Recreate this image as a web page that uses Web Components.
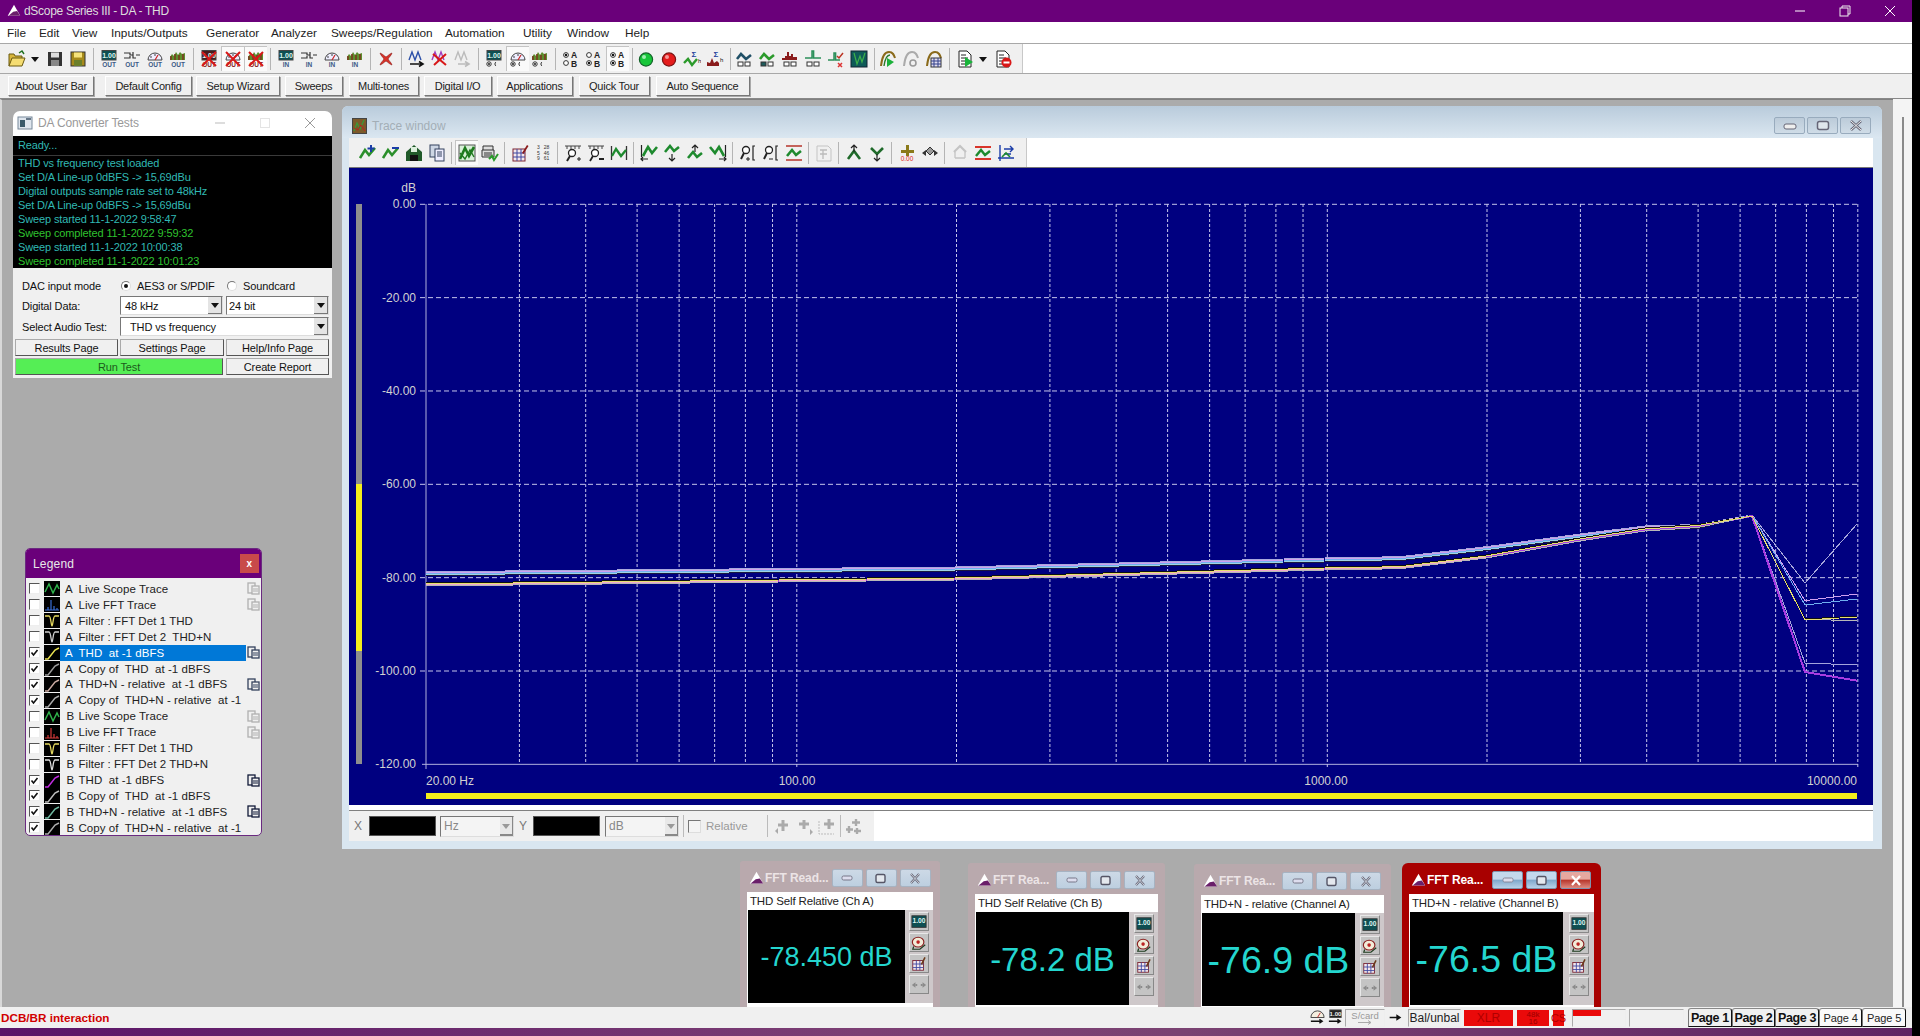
<!DOCTYPE html>
<html>
<head>
<meta charset="utf-8">
<title>dScope Series III - DA - THD</title>
<style>
  html, body { margin: 0; height: 100%; background: #000; overflow: hidden; }
  body { font-family: "Liberation Sans", Arial, sans-serif; font-size: 11px; color: #111; }
</style>
</head>
<body>
<ds-app>
  <ds-titlebar text="dScope Series III - DA - THD"></ds-titlebar>
  <ds-menubar></ds-menubar>
  <ds-toolbar main items="folder down save saveas | meter-out conn-out gauge-out spec-out | meter-x *gauge-x *spec-x | meter-in conn-in gauge-in spec-in | redcross | peaks peaks-x peaks-off | meter-r *gauge-r spec-r | ab1 ab2 *ab3 ! green red sigma-wave sigma-spec ! wave-box wave-box2 spec-box spike-box spike-x scope ! play-wave off-wave notes | doc-play down doc-stop"></ds-toolbar>
  <ds-userbar></ds-userbar>
  <ds-mdi>
    <da-tests></da-tests>
    <legend-window></legend-window>
    <trace-window></trace-window>
    <fft-reader style="left:740px;top:762px;width:200px" name="FFT Read..." caption="THD Self Relative (Ch A)" value="-78.450 dB" size="27" dw="157"></fft-reader>
    <fft-reader style="left:968px;top:764px;width:197px" name="FFT Rea..." caption="THD Self Relative (Ch B)" value="-78.2 dB" size="33"></fft-reader>
    <fft-reader style="left:1194px;top:765px;width:197px" name="FFT Rea..." caption="THD+N - relative (Channel A)" value="-76.9 dB" size="37.5"></fft-reader>
    <fft-reader style="left:1402px;top:764px;width:199px" name="FFT Rea..." caption="THD+N - relative (Channel B)" value="-76.5 dB" size="37.5" active></fft-reader>
  </ds-mdi>
  <ds-statusbar></ds-statusbar>
</ds-app>

<script>
// small icon set, all drawn on an 18x18 box
const zig = (c = '#2b8f2b', w = 2.6, p = '1,14 6,6 10,11 16,4') =>
  `<polyline points="${p}" fill="none" stroke="${c}" stroke-width="${w}"/>`;
const tag = (t, c = '#3c5a86', y = 17) =>
  `<text x="9" y="${y}" font-size="6.5" font-weight="700" fill="${c}" text-anchor="middle">${t}</text>`;
const cross = '<path d="M2 2L16 16M16 2L2 16" stroke="#d81818" stroke-width="2"/>';
const radios = '<circle cx="4" cy="14" r="2.2" fill="#fff" stroke="#333"/><circle cx="4" cy="14" r=".9" fill="#000"/><path d="M11 12a2.4 2.4 0 0 0 0 4" fill="none" stroke="#333"/>';
const parts = {
  meter: '<rect x="2" y="0.5" width="14" height="9.5" fill="#0e4f52" stroke="#444"/><text x="9" y="8" font-size="7" font-weight="700" fill="#dff5f0" text-anchor="middle">1.00</text>',
  conn: '<path d="M1 3h6v2h3M1 8h6V6M10 2v6h3M13 5h4" fill="none" stroke="#333" stroke-width="1.2"/>',
  gauge: '<path d="M2 10a7 7 0 0 1 14 0z" fill="#eef" stroke="#444"/><path d="M9 10l3-5" stroke="#c22" stroke-width="1.2"/><path d="M4 7h2M9 4v2" stroke="#444"/>',
  spec: '<path d="M1 10V7l2-3 2 2 2-4 2 3 2-3 2 2 3-1v7z" fill="#5d8f2e"/><path d="M2 10V6M6 10V4M10 10V5M14 10V4" stroke="#7b3a20" stroke-width="1.6"/>'
};
function abIcon(a, b, col = '#222') {
  const dot = (y, on) => `<circle cx="4" cy="${y}" r="2.4" fill="#fff" stroke="#333"/>` + (on ? `<circle cx="4" cy="${y}" r="1.2" fill="#111"/>` : '');
  return dot(5, a) + dot(13, b) +
    `<text x="12" y="8" font-size="8.5" font-weight="700" fill="${col}" text-anchor="middle">A</text><text x="12" y="17" font-size="8.5" font-weight="700" fill="${col}" text-anchor="middle">B</text>`;
}
const icons = {
  folder: '<path d="M1 16V4h5l1 2h7v3" fill="#d8b63c" stroke="#6b5a10"/><path d="M1 16l3-8h13l-3 8z" fill="#f5dd72" stroke="#6b5a10"/><path d="M11 3l3-2 2 3" fill="none" stroke="#1c6e1c" stroke-width="1.4"/>',
  down: '<path d="M4 7h8l-4 5z" fill="#111"/>',
  save: '<rect x="2" y="2" width="14" height="14" fill="#333"/><rect x="5" y="2.5" width="8" height="5" fill="#ddd"/><rect x="5" y="10" width="8" height="6" fill="#888"/>',
  saveas: '<rect x="2" y="2" width="14" height="14" fill="#a68a1a" stroke="#333"/><rect x="5" y="2.5" width="8" height="5" fill="#f5e27a"/><rect x="5" y="10" width="8" height="6" fill="#6b7f2a"/>',
  redcross: '<path d="M3 3c3 1 4 3 6 4 2-1 3-3 6-4-1 3-3 4-4 6 1 2 3 3 4 6-3-1-4-3-6-4-2 1-3 3-6 4 1-3 3-4 4-6-1-2-3-3-4-6z" fill="#d9332a" stroke="#8a1a15" stroke-width=".6"/>',
  peaks: '<path d="M1 10L4 2 7 10 10 2 13 10" fill="none" stroke="#2b4fa8" stroke-width="1.4"/><path d="M2 14h12M11 11.5l4 2.5-4 2.5" fill="none" stroke="#111" stroke-width="1.6"/>',
  'peaks-x': '<path d="M1 10L4 2 7 10 10 2 13 10" fill="none" stroke="#a03cc0" stroke-width="1.4"/><path d="M2 4l13 11M15 4L3 15" stroke="#d81818" stroke-width="2"/>',
  'peaks-off': '<path d="M1 10L4 2 7 10 10 2 13 10" fill="none" stroke="#bbb" stroke-width="1.4"/><path d="M4 14h10M11 11.5l4 2.5-4 2.5" fill="none" stroke="#bbb" stroke-width="1.6"/>',
  ab1: abIcon(1, 0), ab2: abIcon(0, 1), ab3: abIcon(1, 1),
  green: '<circle cx="9" cy="9.5" r="6.6" fill="#18c63a" stroke="#14622a" stroke-width="1.2"/><circle cx="7" cy="7" r="2" fill="#9ff0b0"/>',
  red: '<circle cx="9" cy="9.5" r="6.6" fill="#e41c1c" stroke="#7a1414" stroke-width="1.2"/><circle cx="7" cy="7" r="2" fill="#f59a9a"/>',
  'sigma-wave': zig('#2b9a2b', 2.4, '1,13 5,9 9,15 14,9') + '<text x="11" y="7" font-size="8" font-weight="700" fill="#1b3d9a" text-anchor="middle">Σ</text><text x="15" y="13" font-size="6" fill="#111">h</text>',
  'sigma-spec': '<path d="M1 16v-4l3 1 2-5 2 5 3-2 2 2v3z" fill="#8a1c1c"/><text x="10" y="7" font-size="8" font-weight="700" fill="#1b3d9a" text-anchor="middle">Σ</text><text x="14" y="12" font-size="6" fill="#111">h</text>',
  'wave-box': zig('#1f4f66', 2.6, '2,9 6,4 11,9 16,5') + '<rect x="3" y="12" width="5" height="4" fill="#fff" stroke="#333"/><rect x="10" y="12" width="5" height="4" fill="#fff" stroke="#333"/>',
  'wave-box2': zig('#2b9a2b', 2.6, '2,9 6,4 11,9 16,5') + '<rect x="3" y="12" width="5" height="4" fill="#1e5a5a" stroke="#333"/><rect x="10" y="12" width="5" height="4" fill="#fff" stroke="#333"/>',
  'spec-box': '<path d="M1 10V8h3V6h2V2h2v4h2V4h2v3h4v3z" fill="#8a1c1c"/><rect x="3" y="12" width="5" height="4" fill="#fff" stroke="#333"/><rect x="10" y="12" width="5" height="4" fill="#fff" stroke="#333"/>',
  'spike-box': '<path d="M1 8h7V1h1.6v7H17" fill="none" stroke="#2b8f5a" stroke-width="1.5"/><rect x="3" y="12" width="5" height="4" fill="#fff" stroke="#333"/><rect x="10" y="12" width="5" height="4" fill="#fff" stroke="#333"/>',
  'spike-x': '<path d="M1 10h6V3h1.6v7H13" fill="none" stroke="#2b8f5a" stroke-width="1.5"/><path d="M10 6l2 2 4-5" fill="none" stroke="#b32" stroke-width="1.5"/><path d="M11 13l4 4M15 13l-4 4" stroke="#d33" stroke-width="1.5"/>',
  scope: '<rect x="1" y="1" width="16" height="16" fill="#0e5a58" stroke="#123"/><path d="M4 3l3 11 3-8 2 6 3-9" fill="none" stroke="#3db04a" stroke-width="1.2"/>',
  'play-wave': '<path d="M2 16C3 6 6 2 10 2s5 3 6 6" fill="none" stroke="#8a6a1a" stroke-width="2"/><path d="M5 16C6 9 8 5 11 5" fill="none" stroke="#2b7a2b" stroke-width="1.4"/><path d="M8 8l7 4-7 5z" fill="#1bb13a"/>',
  'off-wave': '<path d="M2 16C3 6 6 2 10 2s5 3 6 6" fill="none" stroke="#aaa" stroke-width="2"/><circle cx="11" cy="13" r="3" fill="none" stroke="#999" stroke-width="1.6"/>',
  notes: '<path d="M2 16C3 6 6 2 10 2s5 3 6 6" fill="none" stroke="#8a6a1a" stroke-width="2"/><rect x="6" y="8" width="10" height="9" fill="#dfdcf0" stroke="#333"/><path d="M6 11h10M6 14h10M9 8v9M13 8v9" stroke="#33408a"/>',
  'doc-play': '<path d="M3 1h8l4 4v12H3z" fill="#fff" stroke="#222"/><path d="M5 5h5M5 8h7M5 11h5M5 14h4" stroke="#222"/><path d="M9 7l8 5-8 5z" fill="#19b53a"/>',
  'doc-stop': '<path d="M3 1h8l4 4v12H3z" fill="#fff" stroke="#222"/><path d="M5 5h5M5 8h7M5 11h3M5 14h3" stroke="#222"/><circle cx="12.5" cy="12.5" r="5" fill="#d81818"/><rect x="9.5" y="11.5" width="6" height="2" fill="#fff"/>',
  // trace window tools
  'wave-plus': zig() + '<path d="M12 1v7M8.5 4.5h7" stroke="#1b3da8" stroke-width="2"/>',
  'wave-minus': zig() + '<path d="M10 4h7" stroke="#1b3da8" stroke-width="2"/>',
  'wave-save': '<path d="M1 8l8-7 8 7v9H1z" fill="#215a2a"/><rect x="6" y="3" width="6" height="5" fill="#dcefdc"/><rect x="5" y="11" width="8" height="6" fill="#111"/>',
  copy: '<rect x="2" y="1" width="9" height="12" fill="#cdd6e4" stroke="#33415c"/><rect x="7" y="5" width="9" height="12" fill="#eef" stroke="#33415c"/><path d="M9 8h5M9 10h5M9 12h5" stroke="#33415c"/>',
  'plot-box': '<rect x="1" y="1" width="16" height="16" fill="#d8f0d8" stroke="#555"/>' + zig('#1e7a1e', 2.6, '2,15 7,4 11,12 16,3') + zig('#1e7a1e', 1.4, '2,9 7,15 12,6 16,13'),
  'print-box': '<path d="M2 6V2h10v4M1 6h12v7H1z" fill="#ddd" stroke="#333"/><path d="M3 9h8M3 11h8" stroke="#333"/>' + zig('#2b9a2b', 2, '8,15 11,12 13,16 17,10'),
  table: '<rect x="2" y="5" width="12" height="12" fill="#f4e8ec" stroke="#7a2230"/><path d="M2 9h12M2 13h12M6 5v12M10 5v12" stroke="#3d47a0"/><path d="M11 9l5-8 1.5 1-5 8z" fill="#8a1a1a"/>',
  numbers: '<text x="4.5" y="5" font-size="5" fill="#333" text-anchor="middle">3</text><text x="12.5" y="5" font-size="5" fill="#333" text-anchor="middle">28</text><text x="4.5" y="10.5" font-size="5" fill="#333" text-anchor="middle">5</text><text x="12.5" y="10.5" font-size="5" fill="#333" text-anchor="middle">46</text><text x="4.5" y="16" font-size="5" fill="#333" text-anchor="middle">9</text><text x="12.5" y="16" font-size="5" fill="#333" text-anchor="middle">61</text>',
  'zoom-in': '<path d="M1 2h16M3 2v3M7 2v3M11 2v3M15 2v3" stroke="#444"/><circle cx="8" cy="9" r="3.5" fill="#fff" stroke="#222" stroke-width="1.3"/><path d="M6 12l-3 5" stroke="#222" stroke-width="2"/><path d="M13 15h4M15 13v4" stroke="#222"/>',
  'zoom-out': '<path d="M1 2h16M3 2v3M7 2v3M11 2v3M15 2v3" stroke="#444"/><circle cx="8" cy="9" r="3.5" fill="#fff" stroke="#222" stroke-width="1.3"/><path d="M6 12l-3 5M12 15h5" stroke="#222" stroke-width="1.8"/>',
  'wave-fit': '<path d="M1.5 2v14M16.5 2v14" stroke="#333" stroke-width="1.3"/>' + zig('#1e8a2e', 2.3, '2,12 6,5 11,12 16,6'),
  'left-wave': '<path d="M1.5 1v12M1 15h7M3 13l-2 2 2 2" fill="none" stroke="#222" stroke-width="1.2"/>' + zig('#1e8a2e', 2.6, '3,12 8,3 12,9 17,3'),
  'down-wave': zig('#1e8a2e', 2.6, '2,8 7,2 11,7 16,3') + '<path d="M9 10v7M6 14l3 3 3-3" fill="none" stroke="#222" stroke-width="1.2"/>',
  'up-wave': zig('#1e8a2e', 2.6, '2,14 7,8 11,13 16,9') + '<path d="M9 8V1M6 4l3-3 3 3" fill="none" stroke="#222" stroke-width="1.2"/>',
  'right-wave': '<path d="M16.5 1v12M10 15h7M15 13l2 2-2 2" fill="none" stroke="#222" stroke-width="1.2"/>' + zig('#1e8a2e', 2.6, '1,3 6,9 10,3 15,12'),
  'mag-plus': '<circle cx="7" cy="6" r="3.5" fill="#fff" stroke="#222" stroke-width="1.3"/><path d="M5 9l-3 6" stroke="#222" stroke-width="2"/><path d="M7 15h4M9 13v4" stroke="#222"/><path d="M16 2h-2v14h2" fill="none" stroke="#222" stroke-width="1.2"/>',
  'mag-minus': '<circle cx="7" cy="6" r="3.5" fill="#fff" stroke="#222" stroke-width="1.3"/><path d="M5 9l-3 6" stroke="#222" stroke-width="2"/><path d="M7 15h4" stroke="#222"/><path d="M16 2h-2v14h2" fill="none" stroke="#222" stroke-width="1.2"/>',
  'fit-y': '<path d="M1 2h16M1 16h16" stroke="#b5352a" stroke-width="1.6"/>' + zig('#1e8a2e', 2.6, '2,12 7,6 11,11 16,7'),
  'off-page': '<path d="M2 2h11l3 3v12H2z" fill="none" stroke="#c4c4c4"/><path d="M5 6h7M5 10h7M8 6v9" stroke="#bbb" stroke-width="1.3"/>',
  'up-y': zig('#1f6a2a', 2.6, '3,15 9,7 15,15') + '<path d="M9 8V1M6 4l3-3 3 3" fill="none" stroke="#222" stroke-width="1.2"/>',
  'down-y': zig('#1f6a2a', 2.6, '3,4 9,10 15,4') + '<path d="M9 10v7M6 14l3 3 3-3" fill="none" stroke="#222" stroke-width="1.2"/>',
  'offset': '<path d="M8 1h3v5h5v3h-5v3H8V9H3V6h5z" fill="#8a7a1a"/><text x="9" y="17" font-size="6.5" fill="#d22" text-anchor="middle">0.00</text>',
  'swap': '<path d="M9 3l4 4-4 4-4-4z" fill="#999" stroke="#333"/><path d="M1 9l4-3v6zM17 9l-4-3v6z" fill="#333"/>',
  'off-wave2': zig('#c4c4c4', 2.2, '3,8 9,2 15,8') + '<path d="M4 14h10M4 8v6M14 8v6" stroke="#c4c4c4" stroke-width="1.3"/>',
  'fit-y2': '<path d="M1 3h16M1 15h16" stroke="#d8352a" stroke-width="1.8"/>' + zig('#1e8a2e', 2.4, '2,12 7,6 11,11 16,7'),
  'cursor': '<path d="M3 1v16M1 14h16" stroke="#1b3da8" stroke-width="1.4"/><path d="M7 5h9M13 2l3 3-3 3M7 10h7" fill="none" stroke="#1b3da8" stroke-width="1.4"/>' + zig('#1e8a2e', 1.6, '5,13 9,9 13,13'),
  // bottom x/y toolbar, all greyed
  'g1': '<path d="M9 3v11M4 8h10" stroke="#aaa" stroke-width="3"/><path d="M1 14l3-3v6z" fill="#aaa"/>',
  'g2': '<path d="M8 3v9M3 7h10" stroke="#aaa" stroke-width="3"/><path d="M17 15l-3-3v6zM10 15h5" fill="#aaa"/>',
  'g3': '<path d="M11 2v10M6 7h10" stroke="#aaa" stroke-width="3"/><path d="M1 4v13h15" fill="none" stroke="#bbb" stroke-dasharray="2 1"/>',
  'g4': '<path d="M11 2v7M7 5.5h8M4 9v7M1 12.5h7M12 11v6M9 14h7" stroke="#aaa" stroke-width="2.4"/>',
  // status bar
  'st-gauge': '<path d="M2 9a7 7 0 0 1 14 0z" fill="#f4eedf" stroke="#444"/><path d="M9 9l3-5" stroke="#b22"/><path d="M2 13h12M11 11l3 2-3 2" fill="none" stroke="#111" stroke-width="1.4"/>',
  'st-meter': '<rect x="3" y="1" width="12" height="8" fill="#222" stroke="#444"/><text x="9" y="7.5" font-size="6.5" font-weight="700" fill="#eee" text-anchor="middle">1.00</text><path d="M2 13h12M11 11l3 2-3 2" fill="none" stroke="#111" stroke-width="1.4"/>',
  arrow: '<path d="M2 8h8V5l6 4-6 4v-3H2z" fill="#111"/>',
  // reader side buttons
  'r-meter': '<rect x="1" y="2" width="16" height="13" fill="#0e4f52" stroke="#333"/><text x="9" y="10" font-size="7.5" font-weight="700" fill="#dff5f0" text-anchor="middle">1.00</text>',
  'r-bell': '<ellipse cx="8" cy="8" rx="6.5" ry="5.5" fill="#f2ecd8" stroke="#8a2020" stroke-width="1.3"/><circle cx="8" cy="8" r="2" fill="#b22"/><path d="M3 13l-1 3h8l6-5" fill="none" stroke="#1d3a1d" stroke-width="1.3"/>',
  'r-table': '<rect x="2" y="5" width="12" height="11" fill="#f4e8ec" stroke="#7a2230"/><path d="M2 9h12M2 13h12M6 5v11M10 5v11" stroke="#3d47a0"/><path d="M11 9l4-8 1.5 1-4 8z" fill="#6b3a1a"/>',
  'r-arrows': '<path d="M1 9l4-3v6zM17 9l-4-3v6z" fill="#8b8b8b"/><path d="M5 9h2M11 9h2" stroke="#8b8b8b" stroke-width="2"/>',
  win: '<path d="M9 1L1 15h16z" fill="#fff"/><path d="M2 15l6-5 5-1 4 6z" fill="#6a1f6a"/>'
};
['out', 'in'].forEach(s => {
  const t = tag(s.toUpperCase());
  icons['meter-' + s] = parts.meter + t;
  icons['conn-' + s] = parts.conn + t;
  icons['gauge-' + s] = parts.gauge + t;
  icons['spec-' + s] = parts.spec + t;
});
icons['meter-x'] = parts.meter.replace('#0e4f52', '#4a1a1a') + tag('OUT', '#822') + cross;
icons['gauge-x'] = parts.gauge + tag('OUT', '#822') + cross;
icons['spec-x'] = parts.spec + tag('OUT', '#822') + cross;
icons['meter-r'] = parts.meter + radios;
icons['gauge-r'] = parts.gauge + radios;
icons['spec-r'] = parts.spec + radios;

class DsIcon extends HTMLElement {
  connectedCallback() {
    const size = this.getAttribute('size') || 18;
    const name = this.getAttribute('name');
    this.attachShadow({ mode: 'open' }).innerHTML = `
      <style>
        :host { display: inline-flex; align-items: center; justify-content: center; flex: none; }
        svg { display: block; font-family: "Liberation Sans", Arial, sans-serif; }
      </style>
      <svg width="${size}" height="${size}" viewBox="0 0 18 18">${icons[name] || ''}</svg>`;
  }
}
customElements.define('ds-icon', DsIcon);

class DsApp extends HTMLElement {
  constructor() {
    super();
    this.attachShadow({ mode: 'open' }).innerHTML = `
      <style>
        :host { display: flex; flex-direction: column; width: 1912px; height: 1036px; overflow: hidden; }
        .stripe { height: 8px; flex: none; background: linear-gradient(90deg, #5a1468 0%, #7c3f74 45%, #7a4272 62%, #5f2463 100%); }
      </style>
      <slot></slot>
      <div class="stripe"></div>`;
  }
}
customElements.define('ds-app', DsApp);

class DsTitlebar extends HTMLElement {
  connectedCallback() {
    this.attachShadow({ mode: 'open' }).innerHTML = `
      <style>
        :host { display: flex; align-items: center; height: 22px; flex: none; background: #6a007a; color: #ddd; font-size: 12px; }
        ds-icon { margin: 0 3px 0 7px; }
        .text { flex: 1; letter-spacing: -0.3px; }
        .ctl { width: 45px; display: flex; justify-content: center; }
        svg { display: block; }
      </style>
      <ds-icon name="win" size="14"></ds-icon>
      <span class="text">${this.getAttribute('text')}</span>
      <span class="ctl"><svg width="12" height="12"><path d="M1 6h10" stroke="#fff"/></svg></span>
      <span class="ctl"><svg width="12" height="12"><path d="M3 3V1h8v8H9" fill="none" stroke="#eee"/><rect x="1" y="3" width="8" height="8" fill="none" stroke="#eee"/></svg></span>
      <span class="ctl"><svg width="12" height="12"><path d="M1 1l10 10M11 1L1 11" stroke="#fff"/></svg></span>`;
  }
}
customElements.define('ds-titlebar', DsTitlebar);

class DsMenubar extends HTMLElement {
  connectedCallback() {
    const items = ['File', 'Edit', 'View', 'Inputs/Outputs', 'Generator', 'Analyzer', 'Sweeps/Regulation', 'Automation', 'Utility', 'Window', 'Help'];
    this.attachShadow({ mode: 'open' }).innerHTML = `
      <style>
        :host { display: grid; grid-template-columns: 7px 32px 33px 39px 95px 65px 60px 114px 78px 44px 58px 1fr; align-items: center;
          height: 21px; flex: none; background: #fff; border-bottom: 1px solid #a8a8a8; font-size: 11.8px; color: #222; }
        span { white-space: nowrap; }
      </style>
      <i></i>${items.map(i => `<span>${i}</span>`).join('')}`;
  }
}
customElements.define('ds-menubar', DsMenubar);

class DsToolbar extends HTMLElement {
  connectedCallback() {
    const main = this.hasAttribute('main');
    const cells = this.getAttribute('items').split(/\s+/).map(n => {
      if (n === '|') return '<b class="sep"></b>';
      if (n === '!') return '<b class="sep narrow"></b>';
      const pressed = n[0] === '*';
      const name = pressed ? n.slice(1) : n;
      if (name === 'down') return `<span class="cell small ${pressed ? 'on' : ''}"><ds-icon name="down" size="18"></ds-icon></span>`;
      return `<span class="cell ${pressed ? 'on' : ''}"><ds-icon name="${name}"></ds-icon></span>`;
    }).join('');
    this.attachShadow({ mode: 'open' }).innerHTML = `
      <style>
        :host { display: flex; flex: none; background: #fff; height: 29px; border-bottom: 1px solid ${main ? '#a8a8a8' : '#777'}; }
        .bar { display: flex; align-items: center; background: #f0f0f0; box-sizing: border-box;
          width: ${main ? 1023 : 678}px; padding-left: ${main ? 5.5 : 7}px; border-right: 1px solid #c8c8c8; }
        .cell { width: 23px; height: 25px; display: flex; align-items: center; justify-content: center; box-sizing: border-box; flex: none; }
        .small { width: 15px; }
        .on { background: #fafafa; border-top: 1px solid #c4c4c4; border-left: 1px solid #c4c4c4; }
        .sep { width: ${main ? 8 : 7}px; height: 22px; flex: none; background: linear-gradient(90deg, transparent 3px, #b4b4b4 3px, #b4b4b4 4px, transparent 4px); }
        .narrow { width: 6px; }
      </style>
      <div class="bar">${cells}</div>`;
  }
}
customElements.define('ds-toolbar', DsToolbar);

class DsUserbar extends HTMLElement {
  connectedCallback() {
    const items = [['About User Bar', 86, 11], ['Default Config', 87, 4], ['Setup Wizard', 84, 4.5], ['Sweeps', 58, 6], ['Multi-tones', 70, 5],
      ['Digital I/O', 68, 5], ['Applications', 76, 6], ['Quick Tour', 71, 6], ['Auto Sequence', 94, 0]];
    this.attachShadow({ mode: 'open' }).innerHTML = `
      <style>
        :host { display: flex; align-items: center; height: 24px; flex: none; background: #f0f0f0; padding-left: 8px; border-bottom: 1px solid #888; }
        button { font: inherit; font-size: 11px; letter-spacing: -0.25px; color: #222; height: 20px; padding: 0; background: #f0f0f0; flex: none;
          border: 1px solid; border-color: #fff #777 #777 #fff; box-shadow: 1px 1px 0 #aaa; }
      </style>
      ${items.map(i => `<button style="width:${i[1]}px;margin-right:${i[2]}px">${i[0]}</button>`).join('')}`;
  }
}
customElements.define('ds-userbar', DsUserbar);

class DsMdi extends HTMLElement {
  constructor() {
    super();
    this.attachShadow({ mode: 'open' }).innerHTML = `
      <style>
        :host { display: flex; flex: 1; min-height: 0; background: #f4f4f4; }
        .desk { position: relative; flex: 1; background: #ababab; overflow: hidden; border-left: 2px solid #d8d8d8; box-sizing: border-box; border-top: 1px solid #808080; }
        .inner { position: absolute; left: -2px; top: -1px; width: 1893px; height: 908px; }
        .rail { width: 19px; flex: none; display: flex; justify-content: center; padding-top: 18px; box-sizing: border-box; }
        .rail i { width: 2px; height: 100%; background: #8a8a8a; }
      </style>
      <div class="desk"><div class="inner"><slot></slot></div></div>
      <div class="rail"><i></i></div>`;
  }
}
customElements.define('ds-mdi', DsMdi);

class DaTests extends HTMLElement {
  connectedCallback() {
    const log = [['THD vs frequency test loaded'], ['Set D/A Line-up 0dBFS -> 15,69dBu'], ['Digital outputs sample rate set to 48kHz'],
      ['Set D/A Line-up 0dBFS -> 15,69dBu'], ['Sweep started 11-1-2022 9:58:47'], ['Sweep completed 11-1-2022 9:59:32', 1],
      ['Sweep started 11-1-2022 10:00:38'], ['Sweep completed 11-1-2022 10:01:23', 1]];
    const sel = (t, w, pad = 4) => `<div class="sel" style="width:${w}px"><span style="padding-left:${pad}px">${t}</span><i></i></div>`;
    this.attachShadow({ mode: 'open' }).innerHTML = `
      <style>
        :host { position: absolute; left: 13px; top: 12px; width: 319px; display: block; font-size: 11px; letter-spacing: -0.13px; }
        .title { height: 25px; box-sizing: border-box; padding: 0 0 2px 4px; background: #fff; border-radius: 7px 7px 0 0; display: flex; align-items: center; color: #999; font-size: 12px; }
        .title .t { flex: 1; margin-left: 5px; }
        .title .b { width: 45px; display: flex; justify-content: center; }
        .log { background: #000; height: 132px; color: #31b9b4; line-height: 14px; }
        .ready { height: 19px; line-height: 18px; padding-left: 5px; border-bottom: 1px solid #3a3a3a; }
        .lines { padding: 0 0 0 5px; }
        .lines div { height: 14px; white-space: nowrap; }
        .ok { color: #2fc22f; }
        .panel { background: #f0f0f0; height: 110px; box-sizing: border-box; padding: 9px 3px 0 2px; color: #111; }
        .row { display: flex; align-items: center; height: 21px; }
        .row label { width: 105px; padding-left: 7px; box-sizing: border-box; flex: none; }
        .r { display: inline-flex; align-items: center; gap: 6px; }
        .dot { width: 10px; height: 10px; margin-left: 1px; border-radius: 50%; background: #fff; border: 1px solid #777; border-bottom-color: #ddd; border-right-color: #ddd; box-sizing: border-box; display: flex; align-items: center; justify-content: center; }
        .dot.on::after { content: ""; width: 4px; height: 4px; border-radius: 50%; background: #111; }
        .sel { height: 19px; box-sizing: border-box; background: #fff; border: 1px solid; border-color: #777 #ddd #ddd #777; display: flex; align-items: center; justify-content: space-between; }
        .sel i { width: 14px; height: 17px; background: #e4e4e4; border-right: 1px solid #777; border-bottom: 1px solid #777; box-sizing: border-box; position: relative; }
        .sel i::after { content: ""; position: absolute; left: 3px; top: 6px; border: 4px solid transparent; border-top: 5px solid #111; }
        .btns { display: grid; grid-template-columns: 105px 106px 103px; gap: 2px 0; margin-top: 2px; }
        .btns div { height: 17px; box-sizing: border-box; display: flex; align-items: center; justify-content: center; background: #f0f0f0;
          border: 1px solid; border-color: #aaa #555 #555 #aaa; margin-right: 2px; }
        .btns div.last { margin-right: 0; }
        .btns div.run { grid-column: span 2; background: #55ee55; color: #1c5a1c; margin-right: 3px; }
      </style>
      <div class="title">
        <svg width="16" height="14"><rect x="1" y="1" width="14" height="12" fill="#dfe6ee" stroke="#789"/><rect x="3" y="4" width="5" height="7" fill="#3a5a6a"/><rect x="9" y="2" width="5" height="2" fill="#678"/></svg>
        <span class="t">DA Converter Tests</span>
        <span class="b"><svg width="12" height="12"><path d="M1 6h10" stroke="#bbb"/></svg></span>
        <span class="b"><svg width="12" height="12"><rect x="1.5" y="1.5" width="9" height="9" fill="none" stroke="#e4e4e4"/></svg></span>
        <span class="b"><svg width="12" height="12"><path d="M1 1l10 10M11 1L1 11" stroke="#999"/></svg></span>
      </div>
      <div class="log">
        <div class="ready">Ready...</div>
        <div class="lines">${log.map(l => `<div class="${l[1] ? 'ok' : ''}">${l[0]}</div>`).join('')}</div>
      </div>
      <div class="panel">
        <div class="row" style="height:18px">
          <label>DAC input mode</label>
          <span class="r" style="width:106px"><b class="dot on"></b>AES3 or S/PDIF</span>
          <span class="r"><b class="dot"></b>Soundcard</span>
        </div>
        <div class="row"><label>Digital Data:</label>${sel('48 kHz', 103)}<span style="width:3px"></span>${sel('24 bit', 103, 2)}</div>
        <div class="row"><label>Select Audio Test:</label>${sel('THD vs frequency', 209, 9)}</div>
        <div class="btns">
          <div>Results Page</div><div>Settings Page</div><div class="last">Help/Info Page</div>
          <div class="run">Run Test</div><div class="last">Create Report</div>
        </div>
      </div>`;
  }
}
customElements.define('da-tests', DaTests);

class LegendWindow extends HTMLElement {
  connectedCallback() {
    // channel, label, checked, thumbnail type, colour, copy icon shade, selected
    const rows = [
      ['A', 'Live Scope Trace', 0, 'wave', '#2fb04a', '#b0b0b0'], ['A', 'Live FFT Trace', 0, 'fft', '#3a6fd8', '#b0b0b0'],
      ['A', 'Filter : FFT Det 1 THD', 0, 'notch', '#e8dc60'], ['A', 'Filter : FFT Det 2  THD+N', 0, 'notch', '#cfcfcf'],
      ['A', 'THD  at -1 dBFS', 1, 'slope', '#e8e050', '#33415c', 1], ['A', 'Copy of  THD  at -1 dBFS', 1, 'slope', '#999'],
      ['A', 'THD+N - relative  at -1 dBFS', 1, 'slope', '#c8a8a0', '#33415c'], ['A', 'Copy of  THD+N - relative  at -1', 1, 'slope', '#aaa'],
      ['B', 'Live Scope Trace', 0, 'wave', '#2fb04a', '#b0b0b0'], ['B', 'Live FFT Trace', 0, 'fft', '#d83a3a', '#b0b0b0'],
      ['B', 'Filter : FFT Det 1 THD', 0, 'notch', '#e8dc60'], ['B', 'Filter : FFT Det 2 THD+N', 0, 'notch', '#e0e0e0'],
      ['B', 'THD  at -1 dBFS', 1, 'slope', '#c02ce0', '#111a38'], ['B', 'Copy of  THD  at -1 dBFS', 1, 'slope', '#bbb'],
      ['B', 'THD+N - relative  at -1 dBFS', 1, 'slope', '#6fb8a0', '#111a38'], ['B', 'Copy of  THD+N - relative  at -1', 1, 'slope', '#aaa']
    ];
    const thumb = (t, c) => ({
      wave: `<polyline points="1,11 5,3 9,12 13,4 15,8" fill="none" stroke="${c}" stroke-width="1.5"/>`,
      fft: `<path d="M1 13h14M4 13V10M7 13V3M10 13V9M13 13v-2" stroke="${c}" stroke-width="1.2"/>`,
      notch: `<path d="M1 3h4c2 0 2 10 3 10s1-10 3-10h4" fill="none" stroke="${c}" stroke-width="1.3"/>`,
      slope: `<polyline points="1,14 4,14 11,5 15,3" fill="none" stroke="${c}" stroke-width="1.5"/>`
    })[t];
    const copy = c => `<svg class="cp" width="13" height="13"><rect x="1" y="1" width="7" height="10" fill="none" stroke="${c}" stroke-width="1.3"/><rect x="5" y="4" width="7" height="8" fill="#f0f0f0" stroke="${c}" stroke-width="1.3"/><path d="M6 7h5M6 9h5" stroke="${c}"/></svg>`;
    this.attachShadow({ mode: 'open' }).innerHTML = `
      <style>
        :host { position: absolute; left: 25px; top: 449px; width: 237px; height: 288px; box-sizing: border-box; display: flex; flex-direction: column;
          background: #f0f0f0; border: 1px solid #6a2a80; border-radius: 5px; overflow: hidden; font-size: 11.5px; }
        .head { height: 29px; flex: none; background: #6a007a; color: #e8e8e8; display: flex; align-items: center; justify-content: space-between; padding: 0 2px 0 7px; font-size: 12px; letter-spacing: .2px; }
        .x { width: 19px; height: 19px; background: #c84a4a; color: #fff; font-size: 10px; font-weight: 700; display: flex; align-items: center; justify-content: center; }
        .list { padding-top: 3px; }
        .row { display: flex; align-items: center; height: 15.93px; white-space: pre; color: #222; position: relative; }
        .box { width: 11px; height: 11px; margin-left: 3px; flex: none; box-sizing: border-box; background: #fff; border: 1px solid; border-color: #555 #eee #eee #555; }
        .box svg { display: block; }
        .th { width: 16px; height: 15px; margin: 0 5px 0 4px; background: #000; flex: none; display: block; position: relative; z-index: 1; }
        .lbl { flex: 1; height: 100%; display: flex; align-items: center; overflow: hidden; min-width: 0; margin-left: -5px; padding-left: 5px; letter-spacing: .05px; }
        .sel .lbl { background: #0078d7; color: #fff; }
        .ch { width: 13.5px; flex: none; }
        .ch.b { padding-left: 1.5px; box-sizing: border-box; }
        .end { width: 15px; flex: none; display: flex; justify-content: center; }
        .cp { display: block; }
      </style>
      <div class="head"><span>Legend</span><span class="x">x</span></div>
      <div class="list">
        ${rows.map(r => `
          <div class="row ${r[6] ? 'sel' : ''}">
            <span class="box">${r[2] ? '<svg width="9" height="9"><path d="M1.5 4.5l2 2.5 4-5" fill="none" stroke="#111" stroke-width="1.6"/></svg>' : ''}</span>
            <svg class="th" viewBox="0 0 16 15">${thumb(r[3], r[4])}</svg>
            <span class="lbl"><span class="ch ${r[0] === 'B' ? 'b' : ''}">${r[0]}</span><span>${r[1]}</span></span>
            <span class="end">${r[5] ? copy(r[5]) : ''}</span>
          </div>`).join('')}
      </div>`;
  }
}
customElements.define('legend-window', LegendWindow);

class TracePlot extends HTMLElement {
  connectedCallback() {
    const X = f => 426 + 530.5 * Math.log10(f / 20);
    const Y = db => 204.3 - db * 4.667;
    let grid = '';
    for (let d = 0; d > -120; d -= 20) grid += `<line x1="420" x2="1858" y1="${Y(d)}" y2="${Y(d)}" class="h"/>`;
    grid += `<line x1="422" x2="1858" y1="${Y(-120)}" y2="${Y(-120)}" class="s"/>`;
    const freqs = [30, 40, 50, 60, 70, 80, 90, 100, 200, 300, 400, 500, 600, 700, 800, 900, 1000, 2000, 3000, 4000, 5000, 6000, 7000, 8000, 9000, 10000];
    freqs.forEach(f => { grid += `<line x1="${X(f)}" x2="${X(f)}" y1="204" y2="${f === 10000 || f === 100 || f === 1000 ? 769 : 764}" class="v"/>`; });
    grid += `<line x1="426" x2="426" y1="204" y2="769" class="s"/>`;
    const upper = '426,571.7 955,567 1325,558 1400,556.7 1486,546.7 1580,534 1645,526 1698,524.5 1752,515';
    const lower = '426,584 955,578 1325,568 1400,566.7 1486,556 1580,539 1645,529 1698,525.5 1752,516';
    const shift = (pts, dy) => pts.split(' ').map(p => { const [a, b] = p.split(','); return a + ',' + (+b + (+a < 1700 ? dy : 0)); }).join(' ');
    const traces = [
      [shift(upper, 0) + ' 1805,583 1857,524', '#a8a8dc', 1],
      [shift(upper, 1) + ' 1805,600.7 1857,594', '#d0a0f0', 1],
      [shift(upper, 2) + ' 1805,605 1857,599', '#6fb0f0', 1],
      [shift(upper, 3), '#a0d4e4', 1],
      [shift(upper, 4), '#1a1a40', 1],
      [shift(lower, 2) + ' 1805,663 1857,665', '#a4a4dc', 1],
      [shift(lower, 1) + ' 1805,672 1857,680.7', '#a83ce0', 2],
      [shift(lower, 2) + ' 1805,619 1857,621', '#b8b8b8', 1],
      [shift(lower, -1) + ' 1805,619 1857,616', '#101010', 1],
      [shift(lower, 0) + ' 1805,620 1857,617', '#e8e070', 1],
      [shift(lower, 1).split(' ').slice(0, 5).join(' '), '#f0a8d0', 1]
    ].map(t => `<polyline points="${t[0]}" stroke="${t[1]}" stroke-width="${t[2]}" fill="none"/>`).join('');
    const yLabels = [0, -20, -40, -60, -80, -100, -120].map(d =>
      `<text x="416" y="${Y(d) + 4}" text-anchor="end">${d === 0 ? '0.00' : d + '.00'}</text>`).join('');
    this.attachShadow({ mode: 'open' }).innerHTML = `
      <style>
        :host { display: block; height: 637px; background: #000080; flex: none; }
        svg { display: block; font-family: "Liberation Sans", Arial, sans-serif; font-size: 12px; }
        text { fill: #d2d2d2; }
        .h { stroke: #c4c4ea; stroke-dasharray: 5 3; }
        .v { stroke: #c4c4ea; stroke-dasharray: 3 2; }
        .s { stroke: #b0b0dc; }
        polyline { shape-rendering: crispEdges; }
      </style>
      <svg width="1524" height="637" viewBox="349 168 1524 637">
        ${grid}
        <g>${traces}</g>
        <rect x="356" y="204" width="6" height="560" fill="#8e8e8e"/>
        <rect x="356" y="484" width="6" height="167" fill="#f4ee1c"/>
        <rect x="426" y="793" width="1431" height="6" fill="#f4ee1c"/>
        <text x="416" y="192" text-anchor="end">dB</text>
        ${yLabels}
        <text x="426" y="785">20.00 Hz</text>
        <text x="797" y="785" text-anchor="middle">100.00</text>
        <text x="1326" y="785" text-anchor="middle">1000.00</text>
        <text x="1857" y="785" text-anchor="end">10000.00</text>
      </svg>`;
  }
}
customElements.define('trace-plot', TracePlot);

class TraceWindow extends HTMLElement {
  connectedCallback() {
    const winBtn = svg => `<span class="wb">${svg}</span>`;
    this.attachShadow({ mode: 'open' }).innerHTML = `
      <style>
        :host { position: absolute; left: 342px; top: 7px; width: 1540px; height: 743px; box-sizing: border-box; display: flex; flex-direction: column;
          border-radius: 6px 6px 0 0; background: #d9e6f0; padding: 0 9px 0 7px; }
        .title { height: 32px; flex: none; box-sizing: border-box; margin: 0 -9px 0 -7px; padding: 7px 11px 0 10px; display: flex; align-items: center; color: #a3aeb6; font-size: 12px;
          border-radius: 6px 6px 0 0; background: linear-gradient(#b9cbdb, #dbe7f1); }
        .t { flex: 1; margin-left: 5px; }
        .wb { width: 31px; height: 17px; box-sizing: border-box; margin-left: 2px; border: 1px solid #98abbd; border-radius: 2px; background: linear-gradient(#bccbd9, #cfdce7); display: flex; align-items: center; justify-content: center; }
        .gap { height: 5px; flex: none; background: #fff; border-bottom: 1px solid #808080; }
        .xy { height: 30px; flex: none; background: #fff; display: flex; }
        .xybar { width: 525px; background: #f0f0f0; display: flex; align-items: center; font-size: 12px; color: #777; }
        .blk { width: 67px; height: 20px; background: #000; border: 1px solid #555; box-sizing: border-box; flex: none; }
        .sel { width: 74px; height: 21px; box-sizing: border-box; flex: none; border: 1px solid; border-color: #777 #ddd #ddd #777; background: #f4f4f4; color: #888; display: flex; align-items: center; justify-content: space-between; padding-left: 3px; }
        .sel i { width: 13px; height: 19px; background: #e8e8e8; border-right: 1px solid #888; border-bottom: 2px solid #888; box-sizing: border-box; position: relative; }
        .sel i::after { content: ""; position: absolute; left: 2px; top: 7px; border: 4px solid transparent; border-top: 5px solid #999; }
        .sp { width: 1px; height: 22px; background: #bbb; flex: none; }
        .ck { width: 13px; height: 13px; box-sizing: border-box; flex: none; background: #f4f4f4; border: 1px solid; border-color: #777 #ddd #ddd #777; }
        ds-icon { margin-right: 4px; }
      </style>
      <div class="title">
        <svg width="15" height="18"><rect x=".5" y="1.5" width="14" height="15" fill="#7c5a2a" stroke="#444"/><path d="M2 14l3-8 3 6 4-9" fill="none" stroke="#3a9a3a" stroke-width="1.3"/><path d="M2 11l4 2 3-5 4 6" fill="none" stroke="#b22" /></svg>
        <span class="t">Trace window</span>
        ${winBtn('<svg width="14" height="8"><rect x="1" y="2" width="12" height="5" rx="2" fill="#eee" stroke="#667"/></svg>')}
        ${winBtn('<svg width="14" height="11"><rect x="1.5" y="1.5" width="11" height="8" rx="2" fill="#dfe6ec" stroke="#667" stroke-width="1.5"/></svg>')}
        ${winBtn('<svg width="14" height="11"><path d="M2 1l10 9M12 1L2 10" stroke="#667" stroke-width="2.5"/><path d="M2 1l10 9M12 1L2 10" stroke="#eee"/></svg>')}
      </div>
      <ds-toolbar items="wave-plus wave-minus wave-save copy | *plot-box print-box | table numbers | zoom-in zoom-out wave-fit | left-wave down-wave up-wave right-wave | mag-plus mag-minus fit-y | off-page | up-y down-y | offset swap | off-wave2 fit-y2 cursor"></ds-toolbar>
      <trace-plot></trace-plot>
      <div class="gap"></div>
      <div class="xy">
        <div class="xybar">
          <span style="width:20px;padding-left:5px;box-sizing:border-box">X</span>
          <span class="blk"></span>
          <span style="width:4px"></span>
          <span class="sel">Hz<i></i></span>
          <span style="width:19px;padding-left:5px;box-sizing:border-box">Y</span>
          <span class="blk"></span>
          <span style="width:5px"></span>
          <span class="sel">dB<i></i></span>
          <span style="width:4px"></span><span class="sp"></span>
          <span style="width:4px"></span><span class="ck"></span>
          <span style="margin-left:5px;width:61px;font-size:11.5px;color:#999">Relative</span>
          <span class="sp"></span><span style="width:6px"></span>
          <ds-icon name="g1"></ds-icon><ds-icon name="g2"></ds-icon><ds-icon name="g3"></ds-icon><span class="sp" style="margin-right:4px"></span><ds-icon name="g4"></ds-icon>
        </div>
      </div>`;
  }
}
customElements.define('trace-window', TraceWindow);

class FftReader extends HTMLElement {
  connectedCallback() {
    const active = this.hasAttribute('active');
    const side = ['r-meter', 'r-bell', 'r-table', 'r-arrows'];
    this.attachShadow({ mode: 'open' }).innerHTML = `
      <style>
        :host { position: absolute; display: block; height: 170px; box-sizing: border-box; padding: 0 7px; border-radius: ${active ? '6px 6px' : '3px 3px'} 0 0;
          background: ${active ? '#a80000' : '#b9a9ad'}; }
        .title { height: 31px; box-sizing: border-box; padding-top: 3px; display: flex; align-items: center; color: ${active ? '#fff' : '#ece4e6'}; font-weight: 700; font-size: 12px; letter-spacing: -0.1px; }
        .title ds-icon { margin: 0 1px 0 2px; }
        .t { flex: 1; white-space: nowrap; }
        .wb { width: 31px; height: 18px; box-sizing: border-box; margin-left: 3px; border-radius: 2px; flex: none; display: flex; align-items: center; justify-content: center;
          border: 1px solid ${active ? '#7f93ad' : '#a6b3c2'}; background: ${active ? 'linear-gradient(#c4d8ec 45%, #7ea7cb 50%, #b9d2e8)' : 'linear-gradient(#cdd9e6, #bdcfe0)'}; }
        .wb.c { margin-right: 3px; background: ${active ? 'linear-gradient(#e6a8a0 45%, #b8352a 50%, #dd8a80)' : 'linear-gradient(#cdd9e6, #bdcfe0)'}; }
        .body { background: #fff; }
        .cap { height: 17px; line-height: 18px; padding-left: 3px; font-size: 11.5px; letter-spacing: -0.15px; color: #222; white-space: nowrap; }
        .main { display: flex; height: 110px; margin-top: 1px; }
        .disp { width: ${this.getAttribute('dw') || 153}px; height: 93px; box-sizing: border-box; padding-top: 2px; margin-left: 1px; background: #000; color: #24d6cf; display: flex; align-items: center; justify-content: center; flex: none;
          font-size: ${this.getAttribute('size')}px; white-space: nowrap; }
        .side { flex: 1; background: linear-gradient(#cec8ca 0, #cec8ca 93px, #fff 93px); display: flex; flex-direction: column; align-items: center; padding-top: 2px; box-sizing: border-box; }
        .sb { width: 20px; height: 19px; margin-bottom: 2px; box-sizing: border-box; background: #c4c4c4; border: 1px solid; border-color: #e8e8e8 #888 #888 #e8e8e8; display: flex; align-items: center; justify-content: center; }
      </style>
      <div class="title">
        <ds-icon name="win" size="15"></ds-icon>
        <span class="t">${this.getAttribute('name')}</span>
        <span class="wb"><svg width="14" height="8"><rect x="2" y="2" width="10" height="4" rx="1.5" fill="#dde" stroke="${active ? '#889' : '#778'}"/></svg></span>
        <span class="wb"><svg width="14" height="11"><rect x="2" y="1.5" width="9" height="8" rx="1.5" fill="#e4e8ee" stroke="#556" stroke-width="1.4"/></svg></span>
        <span class="wb c"><svg width="14" height="11"><path d="M3 1l8 9M11 1l-8 9" stroke="${active ? '#fff' : '#667'}" stroke-width="2.2"/>${active ? '' : '<path d="M3 1l8 9M11 1l-8 9" stroke="#e4e8ee" stroke-width=".8"/>'}</svg></span>
      </div>
      <div class="body">
        <div class="cap">${this.getAttribute('caption')}</div>
        <div class="main">
          <div class="disp">${this.getAttribute('value')}</div>
          <div class="side">${side.map(s => `<span class="sb"><ds-icon name="${s}" size="16"></ds-icon></span>`).join('')}</div>
        </div>
      </div>`;
  }
}
customElements.define('fft-reader', FftReader);

class DsStatusbar extends HTMLElement {
  connectedCallback() {
    const page = (t, b) => `<span class="pg ${b ? 'bold' : ''}">${t}</span>`;
    this.attachShadow({ mode: 'open' }).innerHTML = `
      <style>
        :host { display: flex; align-items: center; height: 21px; flex: none; background: #f0f0f0; font-size: 11px; padding-right: 6px; box-sizing: border-box; }
        .msg { color: #d00000; font-weight: 700; font-size: 11.7px; padding-left: 1px; margin-right: auto; }
        .box { height: 18px; box-sizing: border-box; border: 1px solid; border-color: #aaa #eee #eee #aaa; display: flex; align-items: center; justify-content: center; flex: none; }
        .red { background: #ea0a0a; color: #b00000; border: 0; height: 16px; display: flex; align-items: center; justify-content: center; flex: none; }
        .pg { width: 43.6px; height: 19px; box-sizing: border-box; flex: none; display: flex; align-items: center; justify-content: center; border: 1px solid #111; border-left-color: #777; border-top-color: #888; border-radius: 3px 3px 0 0; font-size: 11px; letter-spacing: -0.1px; color: #222; background: #fafafa; }
        .bold { font-weight: 700; font-size: 12.5px; background: #f0f0f0; color: #111; letter-spacing: -0.4px; }
      </style>
      <span class="msg">DCB/BR interaction</span>
      <ds-icon name="st-gauge" size="17"></ds-icon>
      <ds-icon name="st-meter" size="17" style="margin:0 1px 0 1px"></ds-icon>
      <span class="box" style="width:40px;color:#999;font-size:9.5px;flex-direction:column;line-height:9px">S/card<svg width="18" height="5"><path d="M2 2.5h13M12 .5l3 2-3 2" fill="none" stroke="#aaa"/></svg></span>
      <ds-icon name="arrow" size="15" style="margin:0 5px 0 3px"></ds-icon>
      <span class="box" style="width:53px;font-size:12px;color:#222">Bal/unbal</span>
      <span class="red" style="width:49px;margin-left:3px;font-size:12px">XLR</span>
      <span class="red" style="width:32px;margin-left:4px;font-size:8px;line-height:7px;text-align:center;color:#900">48k<br>16</span>
      <span class="red" style="width:11px;margin-left:4px;font-size:11px">CS</span>
      <span class="box" style="width:54px;margin-left:8px;align-items:flex-start;justify-content:flex-start"><i style="display:block;width:28px;height:6px;background:#ea0a0a"></i></span>
      <span class="box" style="width:55px;margin:0 4px 0 3px"></span>
      ${page('Page 1', 1)}${page('Page 2', 1)}${page('Page 3', 1)}${page('Page 4')}${page('Page 5')}`;
  }
}
customElements.define('ds-statusbar', DsStatusbar);
</script>
</body>
</html>
